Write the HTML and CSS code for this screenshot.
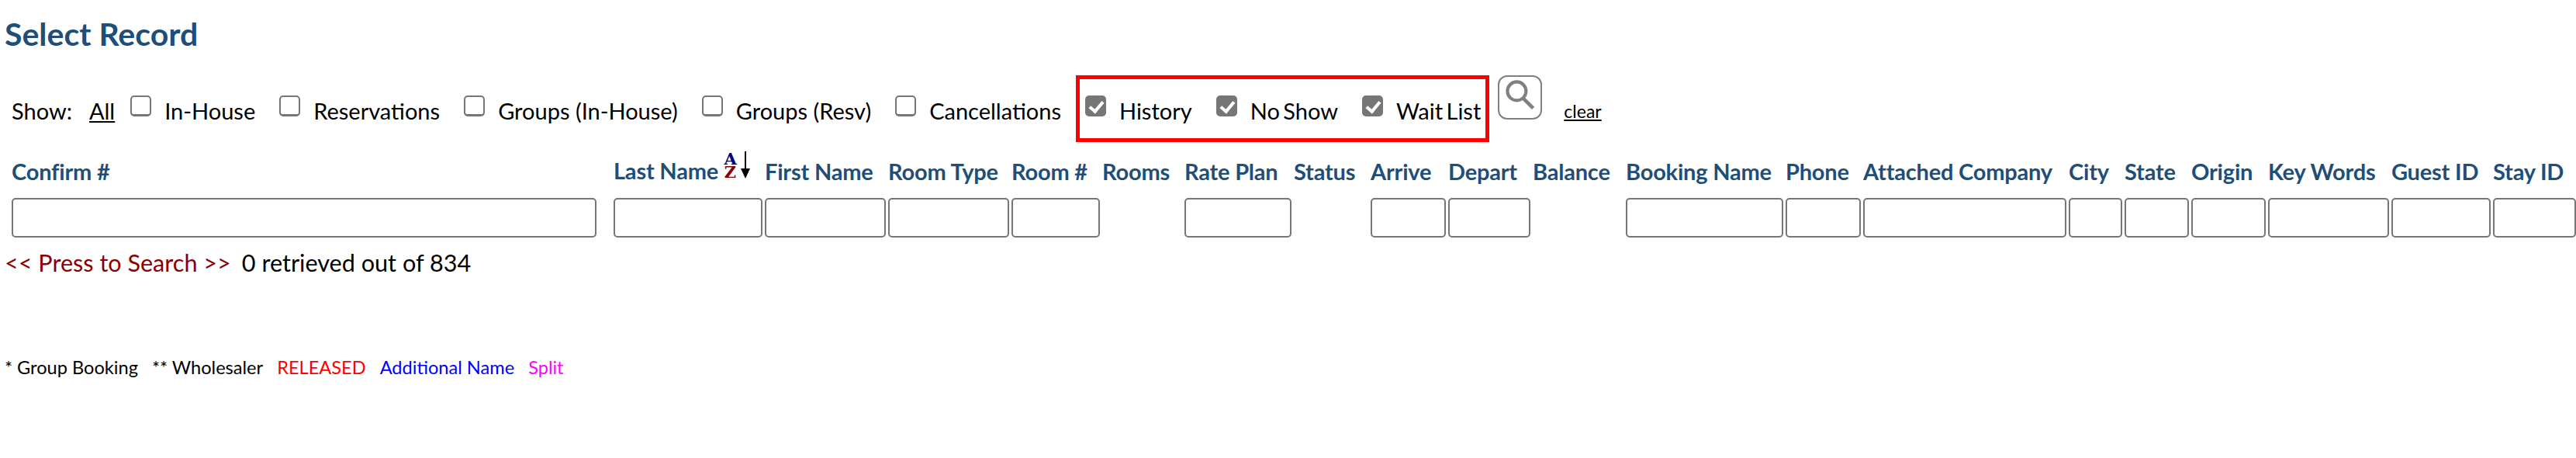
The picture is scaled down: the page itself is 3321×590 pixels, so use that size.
FILE: index.html
```html
<!DOCTYPE html>
<html lang="en">
<head>
<meta charset="utf-8">
<title>Select Record</title>
<link rel="stylesheet" href="styles.css">
</head>
<body>
<h1 class="title">Select Record</h1>
<div class="filters">
  <span class="show-label">Show:</span>
  <a class="all-link" href="#">All</a>
  <label class="opt"><input type="checkbox"><span>In-House</span></label>
  <label class="opt"><input type="checkbox"><span>Reservations</span></label>
  <label class="opt"><input type="checkbox"><span>Groups (In-House)</span></label>
  <label class="opt"><input type="checkbox"><span>Groups (Resv)</span></label>
  <label class="opt"><input type="checkbox"><span>Cancellations</span></label>
  <div class="highlight">
    <label class="opt"><input type="checkbox" checked><span>History</span></label>
    <label class="opt"><input type="checkbox" checked><span>No Show</span></label>
    <label class="opt"><input type="checkbox" checked><span>Wait List</span></label>
  </div>
  <button class="search-btn" type="button" aria-label="Search">
    <svg viewBox="0 0 50 50" width="46" height="46"><circle cx="20" cy="20" r="13" fill="none" stroke="#808080" stroke-width="4.5"/><path d="M29 30 L43 44" stroke="#808080" stroke-width="5" fill="none"/></svg>
  </button>
  <a class="clear-link" href="#">clear</a>
</div>
<div class="grid">
  <div class="th">Confirm #</div>
  <div class="th th-sort"><span class="sort-label">Last Name</span><span class="sort-letters"><span class="sort-a">A</span><span class="sort-z">Z</span></span><svg class="sort-arrow" viewBox="0 0 14 35" width="14" height="35"><path d="M7 0 V24" stroke="#000" stroke-width="2"/><path d="M1 22 H13 L7 35 Z" fill="#000"/></svg></div>
  <div class="th">First Name</div>
  <div class="th">Room Type</div>
  <div class="th">Room #</div>
  <div class="th">Rooms</div>
  <div class="th">Rate Plan</div>
  <div class="th">Status</div>
  <div class="th">Arrive</div>
  <div class="th">Depart</div>
  <div class="th">Balance</div>
  <div class="th">Booking Name</div>
  <div class="th">Phone</div>
  <div class="th">Attached Company</div>
  <div class="th">City</div>
  <div class="th">State</div>
  <div class="th">Origin</div>
  <div class="th">Key Words</div>
  <div class="th">Guest ID</div>
  <div class="th">Stay ID</div>

  <div class="td td-confirm"><input type="text"></div>
  <div class="td"><input type="text"></div>
  <div class="td"><input type="text"></div>
  <div class="td"><input type="text"></div>
  <div class="td"><input type="text"></div>
  <div class="td"></div>
  <div class="td"><input type="text"></div>
  <div class="td"></div>
  <div class="td"><input type="text"></div>
  <div class="td"><input type="text"></div>
  <div class="td"></div>
  <div class="td"><input type="text"></div>
  <div class="td"><input type="text"></div>
  <div class="td"><input type="text"></div>
  <div class="td"><input type="text"></div>
  <div class="td"><input type="text"></div>
  <div class="td"><input type="text"></div>
  <div class="td"><input type="text"></div>
  <div class="td"><input type="text"></div>
  <div class="td td-last"><input type="text"></div>
</div>
<div class="status-line">
  <a class="press" href="#">&lt;&lt; Press to Search &gt;&gt;</a>
  <span>0 retrieved out of 834</span>
</div>
<div class="legend">
  <span>* Group Booking</span>
  <span>** Wholesaler</span>
  <span class="released">RELEASED</span>
  <span class="additional">Additional Name</span>
  <span class="split">Split</span>
</div>
</body>
</html>
```
FILE: styles.css
```css
html, body {
  margin: 0;
  padding: 0;
  background: #fff;
}
body {
  width: 3321px;
  height: 590px;
  overflow: hidden;
  font-family: Lato, "Open Sans", sans-serif;
  color: #000;
}
.title {
  margin: 0;
  padding: 19px 0 0 6px;
  height: 72px;
  box-sizing: border-box;
  font-size: 41px;
  line-height: 50px;
  font-weight: 700;
  color: #1f4e79;
}
.filters {
  display: flex;
  align-items: center;
  height: 89px;
  margin-top: 23px;
  padding-left: 15px;
  font-size: 29px;
}
.show-label {
  margin-right: 22px;
  padding-top: 5px;
}
.all-link {
  color: #000;
  margin-right: 20px;
  padding-top: 5px;
  text-decoration: underline;
}
.opt {
  display: flex;
  align-items: center;
  gap: 17px;
  margin-right: 31px;
  padding-top: 5px;
}
.opt input {
  appearance: none;
  position: relative;
  box-sizing: border-box;
  width: 27px;
  height: 27px;
  margin: 0 0 12px;
  background: #fff;
  border: 2px solid #767676;
  border-bottom-width: 3px;
  border-radius: 5px;
}
.opt input:checked {
  background: #767676;
}
.opt input:checked::after {
  content: "";
  position: absolute;
  left: 7px;
  top: 2px;
  width: 7px;
  height: 14px;
  border: solid #fff;
  border-width: 0 4px 4px 0;
  transform: rotate(40deg);
}
.highlight {
  display: flex;
  align-items: center;
  box-sizing: border-box;
  height: 86px;
  padding: 0 6px 0 7px;
  margin: 0 11px 0 -12px;
  border: 5px solid #f00;
  word-spacing: -3px;
}
.highlight .opt:last-child {
  margin-right: 0;
}
.search-btn {
  width: 57px;
  height: 57px;
  box-sizing: border-box;
  padding: 0;
  margin-bottom: 29px;
  background: #fff;
  border: 2px solid #808080;
  border-radius: 12px;
  display: flex;
  align-items: flex-start;
  justify-content: center;
}
.clear-link {
  margin-left: 28px;
  margin-top: 6px;
  font-size: 23px;
  color: #000;
}
.grid {
  display: grid;
  grid-template-columns: 776px 195px 159px 159px 117px 106px 141px 99px 100px 109px 120px 206px 100px 265px 72px 86px 99px 159px 131px 107px;
  margin: 0 0 0 15px;
}
.th {
  display: flex;
  align-items: center;
  box-sizing: border-box;
  height: 71px;
  padding-top: 2px;
  font-size: 29px;
  font-weight: 700;
  letter-spacing: -0.2px;
  color: #1f4e79;
  white-space: nowrap;
}
.sort-label {
  margin-right: 7px;
  padding-bottom: 2px;
}
.sort-letters {
  display: flex;
  flex-direction: column;
  align-items: center;
  width: 17px;
  margin-bottom: 16px;
  font-family: "DejaVu Serif", "Liberation Serif", serif;
  font-size: 21px;
  line-height: 17px;
  letter-spacing: 0;
}
.sort-a {
  color: #00008b;
}
.sort-z {
  color: #8b0000;
}
.sort-arrow {
  margin: 0 0 16px 4px;
}
.td {
  height: 52px;
  padding-right: 3px;
}
.td input {
  display: block;
  box-sizing: border-box;
  width: 100%;
  height: 51px;
  margin: 0;
  background: #fff;
  border: 2px solid #767676;
  border-radius: 5px;
}
.td-confirm {
  padding-right: 22px;
}
.td-last {
  padding-right: 0;
}
.status-line {
  display: flex;
  gap: 14px;
  margin-top: 12px;
  padding-left: 6px;
  font-size: 30.6px;
  line-height: 40px;
}
.press {
  color: #8b0000;
  text-decoration: none;
}
.legend {
  display: flex;
  gap: 18px;
  margin-top: 98px;
  padding-left: 6px;
  font-size: 23.6px;
  line-height: 32px;
}
.released {
  color: #f00;
}
.additional {
  color: #00f;
}
.split {
  color: #f0f;
}
```
